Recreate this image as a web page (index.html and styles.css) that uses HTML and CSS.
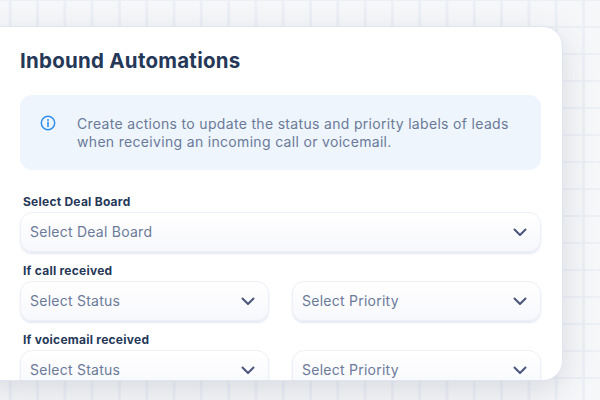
FILE: index.html
```html
<!DOCTYPE html>
<html>

<head>
    <meta charset="UTF-8">
    <title>Inbound Automations</title>
    <link rel="stylesheet" href="styles.css">
</head>

<body>

    <div class="card">
        <h1>Inbound Automations</h1>

        <div class="info-box">
            <svg class="info-icon" width="16" height="16" viewBox="0 0 16 16" fill="none">
                <circle cx="8" cy="8" r="6.7" stroke="#2f8fec" stroke-width="1.5"/>
                <circle cx="8" cy="5" r="1" fill="#2f8fec"/>
                <path d="M8 7.4v4" stroke="#2f8fec" stroke-width="1.6" stroke-linecap="round"/>
            </svg>
            <p>Create actions to update the status and priority labels of leads when receiving an incoming call or voicemail.</p>
        </div>

        <div class="form-group">
            <label>Select Deal Board</label>
            <div class="select">
                <span>Select Deal Board</span>
                <svg class="chevron" width="14" height="9" viewBox="0 0 14 9" fill="none"><path d="M1.5 1.5 7 7l5.5-5.5" stroke="#4a5678" stroke-width="2" stroke-linecap="round" stroke-linejoin="round"/></svg>
            </div>
        </div>

        <div class="form-group">
            <label>If call received</label>
            <div class="select-row">
                <div class="select">
                    <span>Select Status</span>
                    <svg class="chevron" width="14" height="9" viewBox="0 0 14 9" fill="none"><path d="M1.5 1.5 7 7l5.5-5.5" stroke="#4a5678" stroke-width="2" stroke-linecap="round" stroke-linejoin="round"/></svg>
                </div>
                <div class="select">
                    <span>Select Priority</span>
                    <svg class="chevron" width="14" height="9" viewBox="0 0 14 9" fill="none"><path d="M1.5 1.5 7 7l5.5-5.5" stroke="#4a5678" stroke-width="2" stroke-linecap="round" stroke-linejoin="round"/></svg>
                </div>
            </div>
        </div>

        <div class="form-group">
            <label>If voicemail received</label>
            <div class="select-row">
                <div class="select">
                    <span>Select Status</span>
                    <svg class="chevron" width="14" height="9" viewBox="0 0 14 9" fill="none"><path d="M1.5 1.5 7 7l5.5-5.5" stroke="#4a5678" stroke-width="2" stroke-linecap="round" stroke-linejoin="round"/></svg>
                </div>
                <div class="select">
                    <span>Select Priority</span>
                    <svg class="chevron" width="14" height="9" viewBox="0 0 14 9" fill="none"><path d="M1.5 1.5 7 7l5.5-5.5" stroke="#4a5678" stroke-width="2" stroke-linecap="round" stroke-linejoin="round"/></svg>
                </div>
            </div>
        </div>
    </div>

</body>

</html>
```

FILE: styles.css
```css
* {
    box-sizing: border-box;
    margin: 0;
    padding: 0;
}

html,
body {
    height: 400px;
    overflow: hidden;
}

/* Faint tiled backdrop */
body {
    font-family: Inter, "Open Sans", sans-serif;
    background-color: #f6f7f9;
    background-image:
        linear-gradient(#edeff6 2.5px, transparent 2.5px),
        linear-gradient(90deg, #edeff6 2.5px, transparent 2.5px);
    background-size: 27.3px 27px;
    background-position: 8.8px 26px;
    padding: 26px 37px 0 0;
}

.card {
    height: 355px;
    margin-left: -20px;
    padding: 22px 21px 0 39px;
    background: #fff;
    border: 1px solid #dfe4f1;
    border-radius: 20px;
    box-shadow: 0 10px 32px rgba(50, 60, 90, 0.15);
    overflow: hidden;
}

h1 {
    font-size: 20.5px;
    line-height: 24px;
    font-weight: 700;
    letter-spacing: 0.25px;
    color: #253858;
    margin-bottom: 22px;
}

.info-box {
    display: flex;
    align-items: center;
    height: 75px;
    padding: 0 24px 0 20px;
    background: #eef5fc;
    border-radius: 12px;
    margin-bottom: 25px;
}

.info-icon {
    flex: none;
    margin-right: 21px;
    margin-top: -19px;
}

.info-box p {
    font-size: 14px;
    line-height: 18px;
    letter-spacing: 0.32px;
    color: #6b7a99;
}

.form-group {
    margin-bottom: 12px;
}

label {
    display: block;
    font-size: 12px;
    line-height: 14px;
    font-weight: 700;
    letter-spacing: 0.25px;
    color: #253858;
    padding-left: 3px;
    margin-bottom: 3px;
}

.select-row {
    display: grid;
    grid-template-columns: 1fr 1fr;
    column-gap: 23px;
}

.select {
    display: flex;
    align-items: center;
    justify-content: space-between;
    height: 40px;
    padding: 0 13px 0 9px;
    font-size: 14px;
    letter-spacing: 0.25px;
    color: #6b7a99;
    background: linear-gradient(#fff, #f7f8fc);
    border: 1.5px solid #eceff7;
    border-radius: 12px;
    box-shadow: 0 2px 2px #e6e9f4;
}

.select span {
    padding-bottom: 2px;
}
```
